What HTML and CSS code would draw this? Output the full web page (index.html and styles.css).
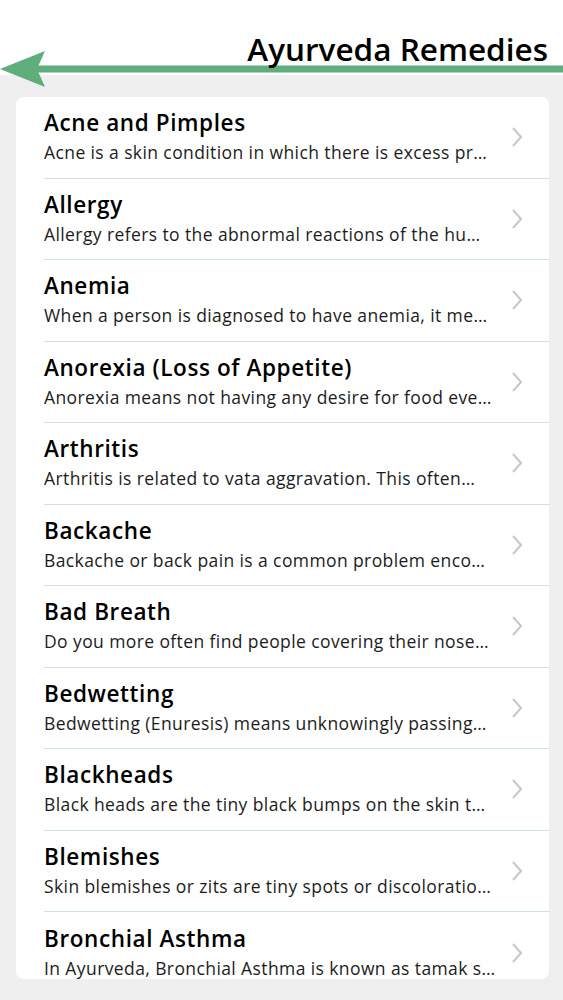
FILE: index.html
```html
<!DOCTYPE html>
<html lang="en">
  <head>
    <meta charset="UTF-8">
    <title>Ayurveda Remedies</title>
    <link rel="stylesheet" href="styles.css">
  </head>
  <body>
    <div class="header">
      <svg class="back-arrow" width="563" height="40" viewBox="0 0 563 40">
        <rect x="34" y="15.5" width="529" height="7" fill="#5fad7b"/>
        <polygon points="0,19 45,1 37,19 45,37" fill="#5fad7b"/>
      </svg>
      <h1>Ayurveda Remedies</h1>
    </div>
    <div class="list">
      <div class="row">
        <div class="text">
          <div class="title">Acne and Pimples</div>
          <div class="desc">Acne is a skin condition in which there is excess pr…</div>
        </div>
        <svg class="chevron" width="10" height="20" viewBox="0 0 10 20"><polyline points="1,1 9,10 1,19" /></svg>
      </div>
      <div class="row">
        <div class="text">
          <div class="title">Allergy</div>
          <div class="desc">Allergy refers to the abnormal reactions of the hu…</div>
        </div>
        <svg class="chevron" width="10" height="20" viewBox="0 0 10 20"><polyline points="1,1 9,10 1,19" /></svg>
      </div>
      <div class="row">
        <div class="text">
          <div class="title">Anemia</div>
          <div class="desc">When a person is diagnosed to have anemia, it me…</div>
        </div>
        <svg class="chevron" width="10" height="20" viewBox="0 0 10 20"><polyline points="1,1 9,10 1,19" /></svg>
      </div>
      <div class="row">
        <div class="text">
          <div class="title">Anorexia (Loss of Appetite)</div>
          <div class="desc">Anorexia means not having any desire for food eve…</div>
        </div>
        <svg class="chevron" width="10" height="20" viewBox="0 0 10 20"><polyline points="1,1 9,10 1,19" /></svg>
      </div>
      <div class="row">
        <div class="text">
          <div class="title">Arthritis</div>
          <div class="desc">Arthritis is related to vata aggravation. This often…</div>
        </div>
        <svg class="chevron" width="10" height="20" viewBox="0 0 10 20"><polyline points="1,1 9,10 1,19" /></svg>
      </div>
      <div class="row">
        <div class="text">
          <div class="title">Backache</div>
          <div class="desc">Backache or back pain is a common problem enco…</div>
        </div>
        <svg class="chevron" width="10" height="20" viewBox="0 0 10 20"><polyline points="1,1 9,10 1,19" /></svg>
      </div>
      <div class="row">
        <div class="text">
          <div class="title">Bad Breath</div>
          <div class="desc">Do you more often find people covering their nose…</div>
        </div>
        <svg class="chevron" width="10" height="20" viewBox="0 0 10 20"><polyline points="1,1 9,10 1,19" /></svg>
      </div>
      <div class="row">
        <div class="text">
          <div class="title">Bedwetting</div>
          <div class="desc">Bedwetting (Enuresis) means unknowingly passing…</div>
        </div>
        <svg class="chevron" width="10" height="20" viewBox="0 0 10 20"><polyline points="1,1 9,10 1,19" /></svg>
      </div>
      <div class="row">
        <div class="text">
          <div class="title">Blackheads</div>
          <div class="desc">Black heads are the tiny black bumps on the skin t…</div>
        </div>
        <svg class="chevron" width="10" height="20" viewBox="0 0 10 20"><polyline points="1,1 9,10 1,19" /></svg>
      </div>
      <div class="row">
        <div class="text">
          <div class="title">Blemishes</div>
          <div class="desc">Skin blemishes or zits are tiny spots or discoloratio…</div>
        </div>
        <svg class="chevron" width="10" height="20" viewBox="0 0 10 20"><polyline points="1,1 9,10 1,19" /></svg>
      </div>
      <div class="row">
        <div class="text">
          <div class="title">Bronchial Asthma</div>
          <div class="desc">In Ayurveda, Bronchial Asthma is known as tamak s…</div>
        </div>
        <svg class="chevron" width="10" height="20" viewBox="0 0 10 20"><polyline points="1,1 9,10 1,19" /></svg>
      </div>
    </div>
  </body>
</html>
```

FILE: styles.css
```css
body {
  margin: 0;
  background-color: #efeff0;
  font-family: "Open Sans", "Noto Sans", sans-serif;
  font-variant-ligatures: none;
  color: #000;
}

.header {
  position: relative;
  height: 75px;
  background-color: #fff;
  display: flex;
  justify-content: flex-end;
  align-items: flex-start;
}

.back-arrow {
  position: absolute;
  left: 0;
  top: 50px;
}

.header h1 {
  position: relative;
  margin: 29px 15px 0 0;
  font-size: 31.5px;
  line-height: 40px;
  font-weight: 600;
}

.list {
  margin: 22px 14px 0 16px;
  height: 882px;
  background-color: #fff;
  border-radius: 8px;
  overflow: hidden;
}

.row {
  display: flex;
  align-items: center;
  height: 81.5px;
  box-sizing: border-box;
  margin-left: 28px;
  border-bottom: 1px solid #cfe2db;
}

.row:last-child {
  border-bottom: none;
}

.text {
  flex-grow: 1;
  min-width: 0;
  padding-bottom: 2px;
}

.title {
  font-size: 22.5px;
  line-height: 27px;
  font-weight: 600;
  letter-spacing: 0.6px;
}

.desc {
  margin-top: 5px;
  font-size: 17.5px;
  line-height: 22px;
  letter-spacing: 0.4px;
  color: #1c1c1c;
  white-space: nowrap;
  overflow: hidden;
  text-overflow: ellipsis;
}

.chevron {
  flex-shrink: 0;
  margin-right: 27px;
  fill: none;
  stroke: #c7c7cc;
  stroke-width: 2;
}
```
